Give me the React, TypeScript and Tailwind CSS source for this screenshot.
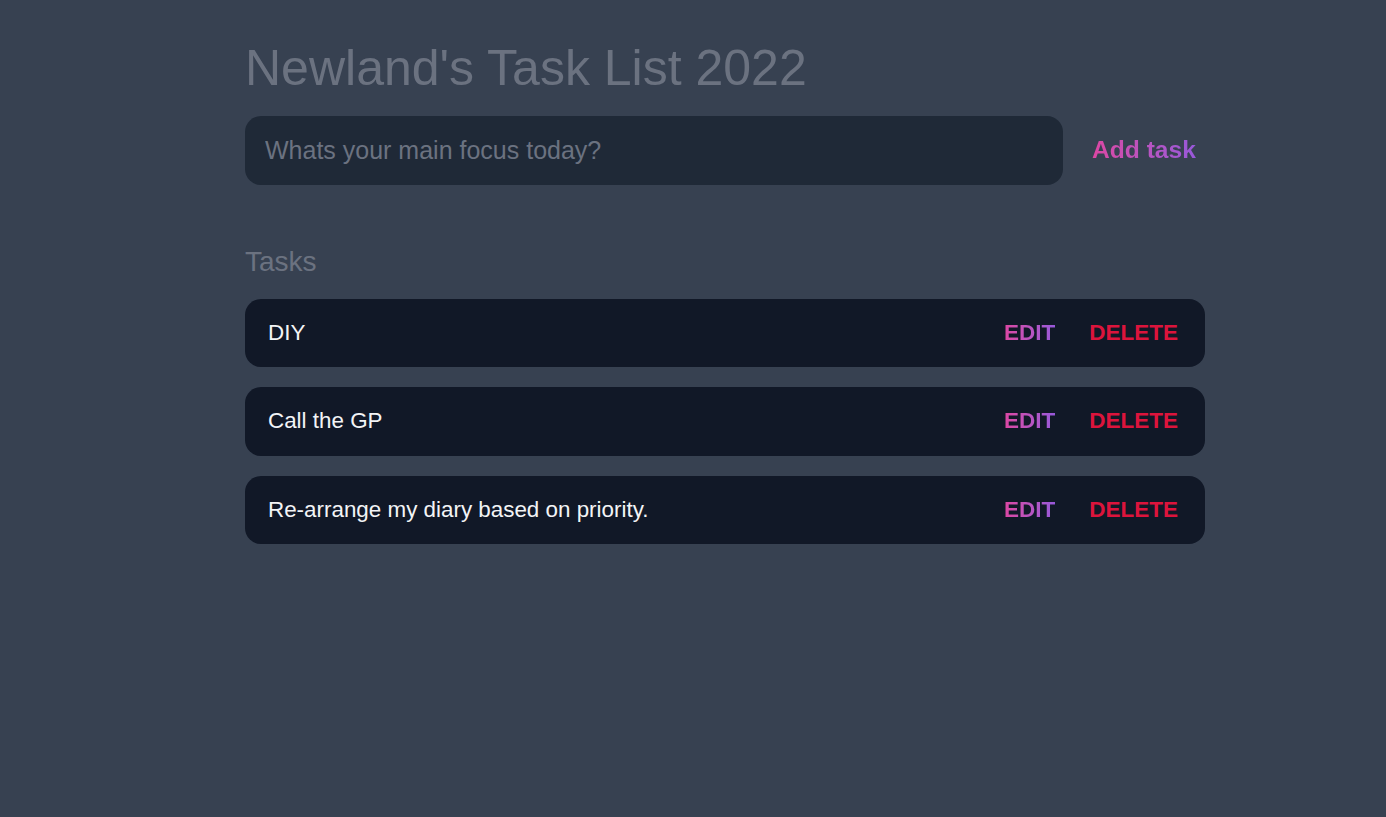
import { useState } from "react";

const initialTasks = ["DIY", "Call the GP", "Re-arrange my diary based on priority."];

export default function App() {
  const [tasks] = useState(initialTasks);

  return (
    <div className="min-h-screen bg-[#374151] font-['Liberation_Sans',Arial,sans-serif]">
      <div className="ml-[245px] w-[960px] pt-[43px]">
        <h1 className="text-[50px] leading-none text-[#6b7280]">Newland's Task List 2022</h1>

        <form className="mt-[23px] flex items-center" onSubmit={(e) => e.preventDefault()}>
          <input
            type="text"
            placeholder="Whats your main focus today?"
            className="h-[68.5px] w-[818px] rounded-2xl bg-[#1f2937] pl-[20px] text-[25px] text-white outline-none placeholder:text-[#6b7280]"
          />
          <button
            type="submit"
            className="ml-[29px] bg-gradient-to-r from-[#dc46a3] to-[#9858da] bg-clip-text text-[24.6px] font-bold text-transparent"
          >
            Add task
          </button>
        </form>

        <h2 className="mt-[63px] text-[28px] leading-none text-[#6b7280]">Tasks</h2>

        <div className="mt-[23px] flex flex-col gap-[20px]">
          {tasks.map((task, i) => (
            <div
              key={i}
              className="flex h-[68.5px] items-center justify-between rounded-2xl bg-[#111827] pl-[23px] pr-[27px]"
            >
              <span className="text-[22.4px] text-[#f3f4f6]">{task}</span>
              <div className="flex items-center gap-[34px] text-[22.5px] font-bold">
                <button className="bg-gradient-to-r from-[#dc46a3] to-[#9858da] bg-clip-text text-transparent">
                  EDIT
                </button>
                <button className="text-[#dc143c]">DELETE</button>
              </div>
            </div>
          ))}
        </div>
      </div>
    </div>
  );
}
